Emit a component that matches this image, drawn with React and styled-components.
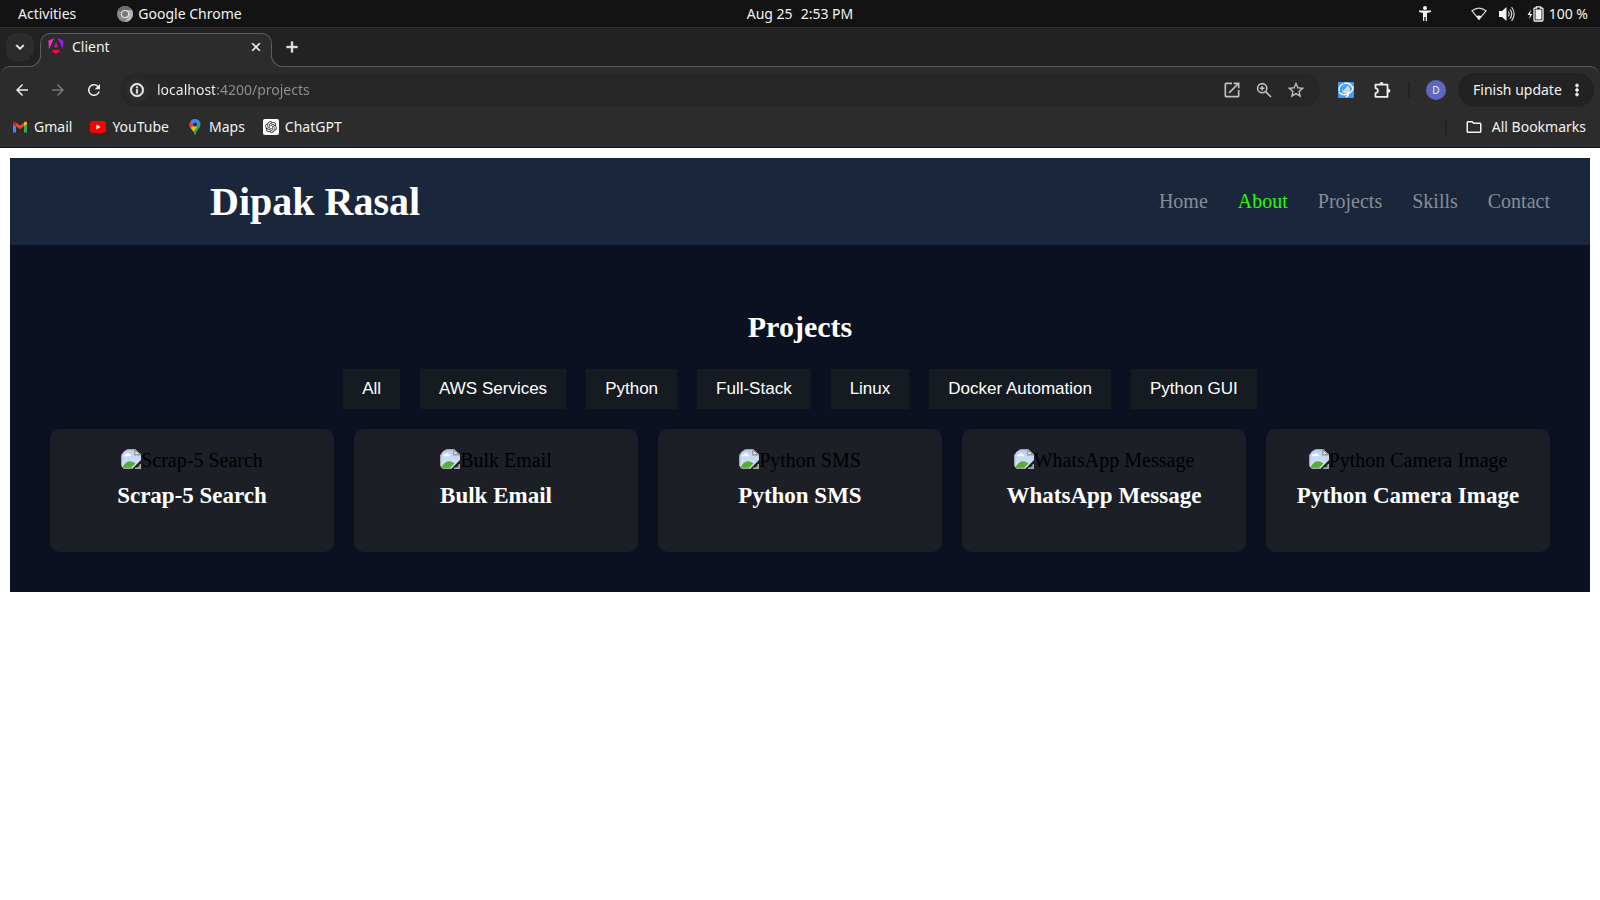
import React from "react";
import styled, { createGlobalStyle } from "styled-components";
import {
  MdArrowBack,
  MdArrowForward,
  MdClose,
  MdExpandMore,
  MdAdd,
  MdOutlineInfo,
  MdOpenInNew,
  MdStarBorder,
  MdRefresh,
  MdMoreVert,
  MdOutlineFolder,
} from "react-icons/md";
import { RiOpenaiFill } from "react-icons/ri";

const GlobalStyle = createGlobalStyle`
  *, *::before, *::after { box-sizing: border-box; }
  body {
    margin: 0;
    background: #ffffff;
    font-family: "Liberation Serif", "Times New Roman", serif;
  }
  button { font: inherit; color: inherit; border: 0; padding: 0; background: none; cursor: pointer; }
  a { color: inherit; text-decoration: none; }
  h1, h2, h3, ul { margin: 0; padding: 0; }
  ul { list-style: none; }
  svg { display: block; flex: none; }
`;

/* ---------- desktop bar ---------- */

const Desktop = styled.div`
  font-family: "Noto Sans", "Open Sans", sans-serif;
  font-size: 14px;
  line-height: 20px;
  color: #f2f2f2;
`;

const SystemBar = styled.header`
  display: grid;
  grid-template-columns: 1fr auto 1fr;
  align-items: center;
  height: 27px;
  padding: 0 12px;
  background: #131313;
`;

const SystemGroup = styled.div`
  display: flex;
  align-items: center;
  justify-content: ${(p) => (p.$end ? "flex-end" : "flex-start")};
  gap: ${(p) => p.$gap}px;
`;

const SystemButton = styled.button`
  display: flex;
  align-items: center;
  gap: 5px;
`;

const ActivitiesButton = styled(SystemButton)`
  padding-left: 6px;
`;

const Clock = styled.button`
  display: flex;
  gap: 8px;
`;

/* ---------- tab strip ---------- */

const TabStrip = styled.div`
  display: flex;
  align-items: flex-start;
  height: 39px;
  padding: 5px 6px 0;
  background: #222222;
  border-top: 1px solid #323232;
`;

/* Thickens an icon's drawn paths, but not its invisible bounding path. */
const BoldIconButton = styled.button`
  svg path:not([fill="none"]) {
    stroke: currentColor;
    stroke-width: 1;
  }
`;

const TabSearch = styled(BoldIconButton)`
  display: grid;
  place-items: center;
  width: 28px;
  height: 28px;
  margin-right: 6px;
  border-radius: 10px;
  background: #2c2c2c;
`;

const Tab = styled.div`
  position: relative;
  z-index: 1;
  display: flex;
  align-items: flex-start;
  gap: 8px;
  width: 232px;
  height: 34px;
  padding: 4px 7px 0 7px;
  background: #2c2c2c;
  border: 1px solid #5c5c5c;
  border-bottom: 0;
  border-radius: 10px 10px 0 0;

  &::before,
  &::after {
    content: "";
    position: absolute;
    bottom: 0;
    width: 12px;
    height: 12px;
    background: #222222;
    border: 0 solid #5c5c5c;
    border-bottom-width: 1px;
  }
  &::before {
    left: -12px;
    border-right-width: 1px;
    border-bottom-right-radius: 12px;
    box-shadow: 4px 4px #2c2c2c;
  }
  &::after {
    right: -12px;
    border-left-width: 1px;
    border-bottom-left-radius: 12px;
    box-shadow: -4px 4px #2c2c2c;
  }
`;

const TabTitle = styled.span`
  flex: 1;
  line-height: 18px;
`;

const TabIconButton = styled(BoldIconButton)`
  display: grid;
  place-items: center;
  width: 16px;
  height: 18px;
`;

const NewTab = styled(TabIconButton)`
  width: 28px;
  height: 28px;
  margin-left: 6px;
`;

/* ---------- toolbar ---------- */

const BrowserChrome = styled.div`
  background: #222222;
`;

const ToolbarPanel = styled.div`
  background: #2c2c2c;
  border-top: 1px solid #5c5c5c;
  border-bottom: 1px solid #141414;
  border-radius: 10px 10px 0 0;
`;

const Toolbar = styled.div`
  display: flex;
  align-items: center;
  padding: 6px 6px 0 4px;
`;

const ToolButton = styled.button`
  display: grid;
  place-items: center;
  width: 36px;
  height: 34px;
  color: ${(p) => (p.$dim ? "#777777" : "#eeeeee")};
`;

const AddressBar = styled.form`
  flex: 1;
  display: flex;
  align-items: center;
  height: 34px;
  margin: 0 8px;
  padding: 0 8px 0 5px;
  border-radius: 17px;
  background: #272727;
`;

const SiteInfo = styled(BoldIconButton)`
  display: grid;
  place-items: center;
  width: 24px;
  height: 24px;
  border-radius: 12px;
  background: #2c2c2c;
`;

const AddressInput = styled.input`
  flex: 1;
  min-width: 0;
  padding: 0;
  margin-left: 8px;
  border: 0;
  outline: 0;
  font: inherit;
  color: transparent;
  background: linear-gradient(90deg, #f5f5f5 58px, #919191 58px);
  background-clip: text;
  -webkit-background-clip: text;
`;

const AddressAction = styled.button`
  display: grid;
  place-items: center;
  width: 32px;
  height: 32px;
  color: #c2c2c2;
`;

const Divider = styled.span`
  width: 2px;
  height: 16px;
  margin: 0 ${(p) => p.$after}px 0 ${(p) => p.$before}px;
  background: #222222;
`;

const Avatar = styled.button`
  width: 20px;
  height: 20px;
  margin-right: 12px;
  border-radius: 10px;
  background: #5b69c1;
  font-size: 10px;
  line-height: 20px;
  text-align: center;
`;

const UpdateButton = styled(BoldIconButton)`
  display: flex;
  align-items: center;
  justify-content: space-between;
  width: 136px;
  height: 34px;
  padding: 0 8px 0 15px;
  border-radius: 17px;
  background: #222222;
`;

const Bookmarks = styled.nav`
  display: flex;
  align-items: center;
  height: 40px;
  padding: 0 14px 0 12px;
  gap: 18px;
`;

const Bookmark = styled.a`
  display: flex;
  align-items: center;
  gap: ${(p) => p.$gap || 6}px;
`;

const Spacer = styled.span`
  flex: 1;
`;

const IconTile = styled.span`
  display: grid;
  place-items: center;
  width: 16px;
  height: 16px;
  border-radius: 2px;
  background: #ffffff;
  color: #222222;
`;

/* ---------- page ---------- */

const Page = styled.div`
  margin: 10px;
  background: #0b1120;
`;

const SiteHeader = styled.header`
  display: flex;
  align-items: center;
  justify-content: space-between;
  padding: 20px 40px 20px 200px;
  background: #1a263b;
`;

const Brand = styled.h1`
  font-size: 40px;
  line-height: 47px;
  color: #ffffff;
`;

const NavList = styled.ul`
  display: flex;
  gap: 30px;
  padding-bottom: 2px;
  font-size: 20px;
  line-height: 24px;
`;

const NavLink = styled.a`
  color: ${(p) => (p.$active ? "#22ff00" : "#868e96")};
`;

const ProjectsSection = styled.section`
  padding: 64px 40px 40px;
`;

const SectionTitle = styled.h2`
  margin-bottom: 24px;
  font-size: 30px;
  line-height: 36px;
  text-align: center;
  color: #ffffff;
`;

const Filters = styled.div`
  display: flex;
  flex-wrap: wrap;
  justify-content: center;
  gap: 20px;
  margin-bottom: 20px;
`;

const FilterButton = styled.button`
  height: 40px;
  padding: 0 19px;
  background: #161b22;
  color: #ffffff;
  font-family: "Liberation Sans", Arial, sans-serif;
  font-size: 17px;
`;

const CardGrid = styled.div`
  display: grid;
  grid-template-columns: repeat(5, minmax(0, 1fr));
  gap: 20px;
`;

const Card = styled.article`
  padding: 20px 20px 42px;
  border-radius: 10px;
  background: #1c1f26;
  text-align: center;
`;

const MissingImage = styled.div`
  display: flex;
  justify-content: center;
  margin-bottom: 10px;
  font-size: 20px;
  line-height: 23px;
  color: #000000;
`;

const CardTitle = styled.h3`
  font-size: 23px;
  line-height: 28px;
  color: #ffffff;
`;

/* ---------- drawings ---------- */

const ChromeIcon = () => (
  <svg width="16" height="16" viewBox="0 0 16 16">
    <circle cx="8" cy="8" r="8" fill="#8a8a8a" />
    <path d="M8 8 1.2 3.9A8 8 0 0 1 15 4.2H8z" fill="#6c6c6c" />
    <path d="M8 4.2h7A8 8 0 0 1 8 16l3.3-6z" fill="#b5b5b5" />
    <circle cx="8" cy="8" r="4" fill="#e8e8e8" />
    <circle cx="8" cy="8" r="3" fill="#777777" />
  </svg>
);

const AccessibilityIcon = () => (
  <svg width="12" height="15" viewBox="0 0 12 15" fill="#f2f2f2">
    <circle cx="6" cy="2" r="2" />
    <path d="M0 4.6h12v1.3L8 7v8H6.7v-4H5.3v4H4V7L0 5.9z" />
  </svg>
);

const WifiIcon = () => (
  <svg width="16" height="14" viewBox="0 0 16 14">
    <path d="M1 3.8Q8-1.6 15 3.8L8 12.4z" fill="none" stroke="#d8d8d8" strokeWidth="1.2" />
    <path d="M5.4 9.2Q8 8 10.6 9.2L8 12.8z" fill="#f2f2f2" />
  </svg>
);

const VolumeIcon = () => (
  <svg width="16" height="16" viewBox="0 0 16 16">
    <path d="M0 5h3l4.5-4v14L3 11H0z" fill="#f2f2f2" />
    <path d="M9.2 5.5q2 2.5 0 5M11 3.3q3.4 4.7 0 9.4M12.6 1q5 7 0 14" fill="none" stroke="#cfcfcf" strokeWidth="1.2" />
  </svg>
);

const BatteryIcon = () => (
  <svg width="17" height="16" viewBox="0 0 17 16">
    <path d="M4 3.5.5 9H3l-1 4.5L5.2 8H3z" fill="#f2f2f2" />
    <path d="M9.5 2V.8h4V2H15q1 0 1 1v11q0 1-1 1H8q-1 0-1-1V3q0-1 1-1z" fill="none" stroke="#f2f2f2" strokeWidth="1.3" />
    <path d="M8.5 3.5h6v10h-6z" fill="#f2f2f2" />
  </svg>
);

const AngularIcon = () => (
  <svg width="16" height="16" viewBox="0 0 24 24">
    <defs>
      <linearGradient id="angular" x1="0" x2="1" y1="0.3" y2="0.2">
        <stop offset="0.2" stopColor="#f52fc8" />
        <stop offset="0.65" stopColor="#c01ff0" />
        <stop offset="1" stopColor="#7a18f5" />
      </linearGradient>
    </defs>
    <path d="M14.692 0l7.832 16.855.814-12.856L14.692 0ZM9.308 0 .662 3.999l.814 12.856L9.308 0Z" fill="url(#angular)" />
    <path d="M8.903 13.93h6.198L12 6.396 8.903 13.93Z" fill="#d8149c" />
    <path d="M16.712 17.711H7.288l-1.204 2.916L12 24l5.916-3.373-1.204-2.916Z" fill="#f4093f" />
  </svg>
);

const ZoomIcon = () => (
  <svg width="16" height="16" viewBox="0 0 16 16" fill="none" stroke="currentColor" strokeWidth="1.6">
    <circle cx="6.2" cy="6.2" r="4.6" />
    <path d="M9.6 9.6 15 15M6.2 4v4.4M4 6.2h4.4" />
  </svg>
);

const SwirlIcon = () => (
  <svg width="16" height="16" viewBox="0 0 16 16">
    <rect width="16" height="16" rx="1" fill="#3d9bf5" />
    <circle cx="8" cy="7.5" r="4" fill="#d5d9e6" />
    <path d="M1.2 9Q.4 3.5 5.5 1.8M6 1.5q6.6-1.2 8.6 4.8M15 4.5q.4 6-6 7M8 15q3.4-1.6 2.6-5.4M1 10q3.6 4 8 2" fill="none" stroke="#ffffff" strokeWidth="1.4" />
    <path d="M4 6Q6 2.6 9.6 3.8L5 9z" fill="#3d9bf5" />
  </svg>
);

const PuzzleIcon = () => (
  <svg width="18" height="18" viewBox="-1 0 18 18">
    <path d="M1.5 3.6h12v12.2h-12v-3.6q2.4-.6 2.4-2.5T1.5 7.2z" fill="none" stroke="#eeeeee" strokeWidth="1.8" strokeLinejoin="round" />
    <path d="M5.5 3.4a2 2.4 0 0 1 4 0zM14 7.7a2.4 2 0 0 1 0 4z" fill="#eeeeee" />
  </svg>
);

const GmailIcon = () => (
  <svg width="16" height="12" viewBox="0 0 16 12">
    <path d="M1 2v9.5h3V5z" fill="#4285f4" />
    <path d="M15 2v9.5h-3V5z" fill="#34a853" />
    <path d="M4 1.5 8 4.6l4-3.1v3.7L8 8.3 4 5.2z" fill="#ea4335" />
    <path d="M1 2.4Q1 .4 2.7.6L4 1.5v3.7L1 3z" fill="#c5221f" />
    <path d="M15 2.4q0-2-1.7-1.8L12 1.5v3.7L15 3z" fill="#fbbc04" />
  </svg>
);

const YouTubeIcon = () => (
  <svg width="16" height="12" viewBox="0 0 16 12">
    <rect width="16" height="12" rx="3" fill="#ff0000" />
    <path d="M6.4 3.5v5L10.6 6z" fill="#ffffff" />
  </svg>
);

const MapsIcon = () => (
  <svg width="16" height="16" viewBox="0 0 16 16">
    <defs>
      <clipPath id="pin">
        <path d="M8 0a5.5 5.5 0 0 1 5.5 5.6C13.5 9.6 9.4 11 8.6 15.4q-.6 1.2-1.2 0C6.6 11 2.5 9.6 2.5 5.6A5.5 5.5 0 0 1 8 0z" />
      </clipPath>
    </defs>
    <g clipPath="url(#pin)">
      <rect width="16" height="16" fill="#34a853" />
      <path d="M0 16V8l8-4 2 4-6 7z" fill="#fbbc04" />
      <path d="M0 3h5l3 2.5L2.5 10 0 9z" fill="#ea4335" />
      <path d="M3 0h13v3L8 8 3.5 2.5z" fill="#4285f4" />
    </g>
    <circle cx="8" cy="5.6" r="2" fill="#26334f" />
  </svg>
);

const BrokenImageIcon = () => (
  <svg width="20" height="20" viewBox="0 0 20 20">
    <defs>
      <clipPath id="frame">
        <path d="M0 9A9 9 0 0 1 9 0H20V20H3.5Q0 18 0 14z" />
      </clipPath>
      <clipPath id="photo">
        <path d="M0 0H14L20 5.5V11L11 20H0z" />
      </clipPath>
      <linearGradient id="sky" x1="0" x2="0" y1="0" y2="1">
        <stop offset="0" stopColor="#b9cdf4" />
        <stop offset="1" stopColor="#dbe6fb" />
      </linearGradient>
    </defs>
    <g clipPath="url(#frame)">
      <g clipPath="url(#photo)">
        <rect width="20" height="20" fill="url(#sky)" />
        <path d="M2.8 7.2q.3-2.2 2.2-2Q6.600 3 8.600 5.200q1.800 0 1.700 2z" fill="#ffffff" />
        <path d="M1 20q1.500-5.500 6-7.500 3.500-1 7.500 2L9 20z" fill="#57ad35" />
        <path d="M14 .6H.6v18.800H14" fill="none" stroke="#a6a6a6" strokeWidth="1.3" />
      </g>
      <path d="M13.8.8v5h5.400z" fill="#f5f5f5" stroke="#999999" strokeWidth="1.4" />
      <path d="M20 14.800V20h-5.200z" fill="#57ad35" />
      <path d="M19.300 15v4.300H14" fill="none" stroke="#a9a9a9" strokeWidth="1.4" />
    </g>
  </svg>
);

/* ---------- data ---------- */

const navItems = ["Home", "About", "Projects", "Skills", "Contact"];
const filters = ["All", "AWS Services", "Python", "Full-Stack", "Linux", "Docker Automation", "Python GUI"];
const projects = ["Scrap-5 Search", "Bulk Email", "Python SMS", "WhatsApp Message", "Python Camera Image"];

export default function App() {
  return (
    <>
      <GlobalStyle />
      <Desktop>
        <SystemBar>
          <SystemGroup $gap={41}>
            <ActivitiesButton>Activities</ActivitiesButton>
            <SystemButton>
              <ChromeIcon />
              Google Chrome
            </SystemButton>
          </SystemGroup>
          <Clock>
            <span>Aug 25</span>
            <span>2:53 PM</span>
          </Clock>
          <SystemGroup $end $gap={40}>
            <AccessibilityIcon />
            <SystemGroup $gap={12}>
              <WifiIcon />
              <VolumeIcon />
              <SystemButton>
                <BatteryIcon />
                100 %
              </SystemButton>
            </SystemGroup>
          </SystemGroup>
        </SystemBar>

        <BrowserChrome>
          <TabStrip>
            <TabSearch aria-label="Search tabs">
              <MdExpandMore size={16} />
            </TabSearch>
            <Tab>
              <AngularIcon />
              <TabTitle>Client</TabTitle>
              <TabIconButton aria-label="Close tab">
                <MdClose size={14} />
              </TabIconButton>
            </Tab>
            <NewTab aria-label="New tab">
              <MdAdd size={18} />
            </NewTab>
          </TabStrip>

          <ToolbarPanel>
            <Toolbar>
              <ToolButton aria-label="Back">
                <MdArrowBack size={18} />
              </ToolButton>
              <ToolButton aria-label="Forward" $dim>
                <MdArrowForward size={18} />
              </ToolButton>
              <ToolButton aria-label="Reload">
                <MdRefresh size={18} />
              </ToolButton>
              <AddressBar onSubmit={(e) => e.preventDefault()}>
                <SiteInfo type="button" aria-label="Site information">
                  <MdOutlineInfo size={16} />
                </SiteInfo>
                <AddressInput aria-label="Address" defaultValue="localhost:4200/projects" />
                <AddressAction type="button" aria-label="Open in app">
                  <MdOpenInNew size={20} />
                </AddressAction>
                <AddressAction type="button" aria-label="Zoom">
                  <ZoomIcon />
                </AddressAction>
                <AddressAction type="button" aria-label="Bookmark this page">
                  <MdStarBorder size={20} />
                </AddressAction>
              </AddressBar>
              <ToolButton aria-label="Extension">
                <SwirlIcon />
              </ToolButton>
              <ToolButton aria-label="Extensions">
                <PuzzleIcon />
              </ToolButton>
              <Divider $before={8} $after={16} />
              <Avatar aria-label="Profile">D</Avatar>
              <UpdateButton>
                Finish update
                <MdMoreVert size={18} />
              </UpdateButton>
            </Toolbar>

            <Bookmarks aria-label="Bookmarks">
              <Bookmark href="#gmail">
                <GmailIcon />
                Gmail
              </Bookmark>
              <Bookmark href="#youtube">
                <YouTubeIcon />
                YouTube
              </Bookmark>
              <Bookmark href="#maps">
                <MapsIcon />
                Maps
              </Bookmark>
              <Bookmark href="#chatgpt">
                <IconTile>
                  <RiOpenaiFill size={14} />
                </IconTile>
                ChatGPT
              </Bookmark>
              <Spacer />
              <Divider $before={0} $after={0} />
              <Bookmark href="#all" $gap={9}>
                <MdOutlineFolder size={18} />
                All Bookmarks
              </Bookmark>
            </Bookmarks>
          </ToolbarPanel>
        </BrowserChrome>
      </Desktop>

      <Page>
        <SiteHeader>
          <Brand>Dipak Rasal</Brand>
          <nav aria-label="Main">
            <NavList>
              {navItems.map((item) => (
                <li key={item}>
                  <NavLink href={`#${item.toLowerCase()}`} $active={item === "About"}>
                    {item}
                  </NavLink>
                </li>
              ))}
            </NavList>
          </nav>
        </SiteHeader>
        <ProjectsSection>
          <SectionTitle>Projects</SectionTitle>
          <Filters>
            {filters.map((name) => (
              <FilterButton key={name}>{name}</FilterButton>
            ))}
          </Filters>
          <CardGrid>
            {projects.map((name) => (
              <Card key={name}>
                <MissingImage>
                  <BrokenImageIcon />
                  {name}
                </MissingImage>
                <CardTitle>{name}</CardTitle>
              </Card>
            ))}
          </CardGrid>
        </ProjectsSection>
      </Page>
    </>
  );
}
